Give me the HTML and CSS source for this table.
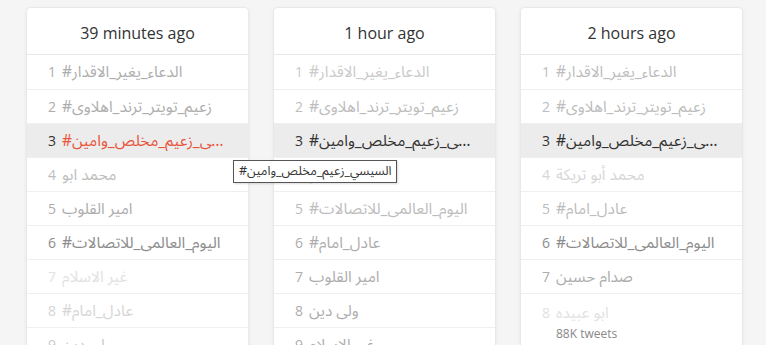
FILE: index.html
```html
<!DOCTYPE html>
<html lang="en">
<head>
<meta charset="utf-8">
<title>Trends</title>
<link rel="stylesheet" href="styles.css">
</head>
<body>
<div class="board">
  <section class="card">
    <h2 class="card-title">39 minutes ago</h2>
    <ol class="list">
      <li class="row c-b"><span class="num">1</span><span class="name">#الدعاء_يغير_الاقدار</span></li>
      <li class="row c-b"><span class="num">2</span><span class="name">#زعيم_تويتر_ترند_اهلاوي</span></li>
      <li class="row active hot"><span class="num">3</span><span class="name">#السيسي_زعيم_مخلص_وامين</span></li>
      <li class="row c-c"><span class="num">4</span><span class="name">محمد ابو</span></li>
      <li class="row c-b"><span class="num">5</span><span class="name">امير القلوب</span></li>
      <li class="row c-a"><span class="num">6</span><span class="name">#اليوم_العالمي_للاتصالات</span></li>
      <li class="row c-f"><span class="num">7</span><span class="name">غير الاسلام</span></li>
      <li class="row c-e"><span class="num">8</span><span class="name">#عادل_امام</span></li>
      <li class="row c-d"><span class="num">9</span><span class="name">ولي دين</span></li>
    </ol>
  </section>
  <section class="card">
    <h2 class="card-title">1 hour ago</h2>
    <ol class="list">
      <li class="row c-d"><span class="num">1</span><span class="name">#الدعاء_يغير_الاقدار</span></li>
      <li class="row c-c"><span class="num">2</span><span class="name">#زعيم_تويتر_ترند_اهلاوي</span></li>
      <li class="row active"><span class="num">3</span><span class="name">#السيسي_زعيم_مخلص_وامين</span></li>
      <li class="row c-c"><span class="num">4</span><span class="name">محمد ابو</span></li>
      <li class="row c-c"><span class="num">5</span><span class="name">#اليوم_العالمي_للاتصالات</span></li>
      <li class="row c-b"><span class="num">6</span><span class="name">#عادل_امام</span></li>
      <li class="row c-b"><span class="num">7</span><span class="name">امير القلوب</span></li>
      <li class="row c-b"><span class="num">8</span><span class="name">ولي دين</span></li>
      <li class="row c-b"><span class="num">9</span><span class="name">غير الاسلام</span></li>
    </ol>
  </section>
  <section class="card">
    <h2 class="card-title">2 hours ago</h2>
    <ol class="list">
      <li class="row c-c"><span class="num">1</span><span class="name">#الدعاء_يغير_الاقدار</span></li>
      <li class="row c-c"><span class="num">2</span><span class="name">#زعيم_تويتر_ترند_اهلاوي</span></li>
      <li class="row active"><span class="num">3</span><span class="name">#السيسي_زعيم_مخلص_وامين</span></li>
      <li class="row c-e"><span class="num">4</span><span class="name">محمد أبو تريكة</span></li>
      <li class="row c-c"><span class="num">5</span><span class="name">#عادل_امام</span></li>
      <li class="row c-a"><span class="num">6</span><span class="name">#اليوم_العالمي_للاتصالات</span></li>
      <li class="row c-b"><span class="num">7</span><span class="name">صدام حسين</span></li>
      <li class="row c-f expanded"><span class="num">8</span><span class="name">ابو عبيده</span><span class="meta">88K tweets</span></li>
      <li class="row c-c"><span class="num">9</span><span class="name">غير الاسلام</span></li>
    </ol>
  </section>
</div>
<div class="tooltip">#السيسي_زعيم_مخلص_وامين</div>
</body>
</html>
```
FILE: styles.css
```css
html, body {
  margin: 0;
  padding: 0;
}
body {
  background: #f5f5f5;
  font-family: "Open Sans", "DejaVu Sans", sans-serif;
  color: #333;
  width: 766px;
  height: 345px;
  overflow: hidden;
  position: relative;
}
.board {
  display: flex;
  gap: 26px;
  padding: 8px 0 0 27px;
  align-items: flex-start;
}
.card {
  width: 221px;
  flex: none;
  background: #fff;
  border-radius: 4px;
  box-shadow: 0 0 0 1px #e9e9e9, 0 1px 4px rgba(0, 0, 0, 0.10);
  overflow: hidden;
}
.card-title {
  margin: 0;
  padding: 14px 0 10px;
  font-size: 16px;
  line-height: 22px;
  font-weight: 400;
  text-align: center;
  color: #333;
  border-bottom: 1px solid #e6e6e6;
}
.list {
  list-style: none;
  margin: 0;
  padding: 0;
}
.row {
  display: flex;
  flex-wrap: wrap;
  align-items: center;
  height: 33px;
  padding: 0 14px 0 21px;
  border-top: 1px solid #efefef;
  font-size: 14px;
  line-height: 20px;
}
.row:first-child {
  border-top: none;
  height: 34px;
}
.num {
  flex: none;
  width: 14px;
  font-family: "Open Sans", sans-serif;
}
.name {
  flex: 1;
  min-width: 0;
  white-space: nowrap;
  overflow: hidden;
  text-overflow: ellipsis;
  direction: ltr;
  font-family: "Noto Sans Arabic", "DejaVu Sans", sans-serif;
  font-size: 15.5px;
}
.meta {
  flex-basis: 100%;
  padding-left: 14px;
  font-size: 12px;
  line-height: 16px;
  color: #888;
  margin-top: 3px;
}
.expanded {
  height: auto;
  padding-top: 9px;
  padding-bottom: 8px;
  align-content: flex-start;
}
.active {
  background: #ececec;
  color: #333;
}
.hot .name {
  color: #e8553c;
}
.c-a { color: #8c8c8c; }
.c-b { color: #adadad; }
.c-c { color: #bdbdbd; }
.c-d { color: #cacaca; }
.c-e { color: #d6d6d6; }
.c-f { color: #e2e2e2; }
.tooltip {
  position: absolute;
  left: 233px;
  top: 160px;
  width: 164px;
  height: 23px;
  box-sizing: border-box;
  padding: 0 5px;
  background: #fff;
  border: 1px solid #555;
  color: #333;
  font-family: "Noto Sans Arabic", "DejaVu Sans", sans-serif;
  font-size: 12.5px;
  line-height: 21px;
  white-space: nowrap;
  overflow: hidden;
  direction: ltr;
  text-align: right;
  box-shadow: 1px 1px 2px rgba(0,0,0,0.15);
}
```
